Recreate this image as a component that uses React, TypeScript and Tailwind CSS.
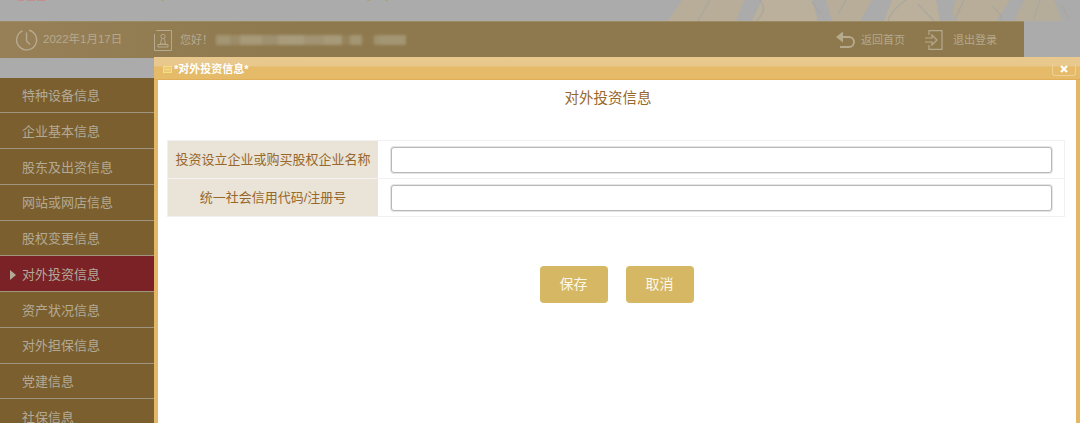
import React from "react";

const menuItems = [
  "特种设备信息",
  "企业基本信息",
  "股东及出资信息",
  "网站或网店信息",
  "股权变更信息",
  "对外投资信息",
  "资产状况信息",
  "对外担保信息",
  "党建信息",
  "社保信息",
];

const formRows = ["投资设立企业或购买股权企业名称", "统一社会信用代码/注册号"];

// masked user name: widths of the pixelated runs
const maskedRuns = [
  [14, "#a39673"],
  [10, "#9c8d68"],
  [22, "#a69a78"],
  [16, "#9f9170"],
  [26, "#a89c7c"],
  [20, "#a29472"],
  [18, "#a69a78"],
  [8, "#95825a"],
  [12, "#a39673"],
  [12, "#8f7a50"],
  [6, "#a0926f"],
  [26, "#a39673"],
] as const;

const FONT = "[font-family:'Liberation_Sans','Noto_Sans_CJK_SC',sans-serif]";

const ClockIcon = () => (
  <svg width="24" height="24" viewBox="0 0 24 24" fill="none" stroke="#b5a98e" strokeWidth="1.4">
    <path d="M7.500 2.800A10 10 0 1 0 14 2.200" />
    <path d="M11.500 4.500v8.500l3.500 3.500" />
  </svg>
);

const UserIcon = () => (
  <svg width="18" height="21" viewBox="0 0 18 21" fill="none" stroke="#b5a98e" strokeWidth="1">
    <path d="M2.500 .5h15v20H.5V4" />
    <circle cx="9" cy="6.500" r="2.200" />
    <path d="M7.500 9l-1 5h5l-1-5M4 14.500h10v2.500H4z" />
  </svg>
);

const BackIcon = () => (
  <svg width="20" height="18" viewBox="0 0 20 18" fill="none" stroke="#b5a98e" strokeWidth="2">
    <path d="M5 6h9a4.500 4.500 0 0 1 0 10H5" />
    <path d="M8 .5v11L1 6z" fill="#b5a98e" stroke="none" />
  </svg>
);

const LogoutIcon = () => (
  <svg width="18" height="20" viewBox="0 0 18 20" fill="none" stroke="#b5a98e" strokeWidth="1.2">
    <path d="M4 5V.6h13v18.800H4V15" />
    <path d="M0 8h7V5l5 5-5 5v-3H0" />
  </svg>
);

// carved pattern in the banner, only its lower part shows
const BannerArt = () => (
  <svg width="1080" height="21" viewBox="0 0 1080 21" className="absolute top-0 left-0">
    <g fill="#b7ad98">
      <path d="M668 21l14-21h62l-8 21z" />
      <path d="M752 21l10-21h50l6 21z" fill="#bab09b" />
      <path d="M832 21l-6-21h46l-12 21z" />
      <path d="M884 21l8-21h44l4 21z" fill="#bab09b" />
      <path d="M950 21l6-21h54l-14 21z" />
      <path d="M1014 21l10-21h30l8 21z" fill="#b5ac99" />
    </g>
    <g fill="none" stroke="#a9a69f" strokeWidth="1.500" opacity="0.8">
      <path d="M710 0l-12 21M760 0c6 8 4 14 -4 21M812 2l14 19M846 0l-8 14M888 21c2-8 8-14 18-21" />
      <path d="M918 4l16 17M964 0l-10 21M992 6c8 6 10 10 10 15M1040 0l-6 18M1062 6l8 15" />
    </g>
    <g fill="#ababab" opacity="0.7">
      <path d="M816 21l8-12 6 12zM946 21l4-14 8 14zM1006 21l6-10 6 10zM1066 21l8-18 6 18z" />
    </g>
    <g>
      <rect x="18" y="0" width="6" height="1" fill="#c48f8f" />
      <rect x="27" y="0" width="8" height="1" fill="#c48f8f" />
      <rect x="37" y="0" width="8" height="1" fill="#c48f8f" />
      <rect x="161" y="0" width="3" height="1" fill="#b39f6f" />
      <rect x="367" y="0" width="3" height="1" fill="#b39f6f" />
      <rect x="385" y="0" width="3" height="1" fill="#b39f6f" />
    </g>
  </svg>
);

const App = () => {
  return (
    <div className={`relative h-[423px] w-[1080px] overflow-hidden bg-[#ababab] text-[12px] ${FONT}`}>
      {/* top banner, mostly hidden behind the overlay */}
      <div className="relative h-[21px] overflow-hidden">
        <BannerArt />
      </div>

      {/* header bar */}
      <div className="flex h-[37px] w-[1024px] items-center justify-between border-t border-[#9c8a63] bg-gradient-to-r from-[#978057] to-[#8e784d] to-30% pr-[27px] pl-[15px] text-[#b5a98e]">
        <div className="flex items-center">
          <ClockIcon />
          <span className="ml-[4px] w-[111px] text-[11.5px]">2022年1月17日</span>
          <UserIcon />
          <span className="ml-[8px] text-[11px]">您好！</span>
          <div className="ml-[3px] flex h-[10px] w-[190px] blur-[1.5px]">
            {maskedRuns.map(([width, color], index) => (
              <span key={index} className="h-full" style={{ width, backgroundColor: color }} />
            ))}
          </div>
        </div>
        <div className="flex items-center text-[11px]">
          <BackIcon />
          <span className="mr-[20px] ml-[6px]">返回首页</span>
          <LogoutIcon />
          <span className="ml-[10px]">退出登录</span>
        </div>
      </div>

      {/* left menu */}
      <ul className="mt-[19.5px] w-[154px]">
        {menuItems.map((item, index) => (
          <li
            key={item}
            className={`relative flex h-[35.75px] items-center border-b border-[#a0957e] pt-[2px] pl-[22px] text-[13px] text-[#b3aa96] ${
              index === 5 ? "bg-[#7a2226]" : "bg-[#7b5f2f]"
            }`}
          >
            {index === 5 && (
              <span className="absolute left-[10px] h-0 w-0 border-y-[5px] border-l-[6px] border-y-transparent border-l-[#b3aa96]" />
            )}
            {item}
          </li>
        ))}
      </ul>

      {/* dialog */}
      <div className="absolute top-[57px] left-[154px] flex h-[366px] w-[926px] flex-col border-x-[4px] border-[#e3b765] bg-[#e3b765]">
        <div className="-mx-[4px] flex h-[23px] items-center justify-between border-b border-[#dfae57] bg-gradient-to-b from-[#e9c88e] from-40% to-[#e5bb69] to-45% pr-[4px] pl-[9px]">
          <div className="flex items-center pt-[3px] text-[11px] font-bold text-white">
            <span className="flex h-[7px] w-[9px] items-center justify-center border border-[#f2e27c] bg-[#ecc97a]">
              <span className="h-px w-[5px] bg-[#f2e27c]" />
            </span>
            <span className="ml-[2px]">*对外投资信息*</span>
          </div>
          <div className="mt-[2px] flex h-[13px] w-[24px] items-center justify-center rounded-b-[3px] border border-t-0 border-[#efcf94]">
            <svg width="8" height="8" viewBox="0 0 8 8" stroke="#fff" strokeWidth="2.200">
              <path d="M1 1l6 6M7 1l-6 6" />
            </svg>
          </div>
        </div>
        <div className="flex-1 bg-white">
          <h2 className="pt-[8px] pr-[18px] text-center text-[14.5px] leading-[20px] font-normal text-[#97682a]">
            对外投资信息
          </h2>
          <div className="mt-[32px] mr-[11px] ml-[9px] border border-[#f1f1f1]">
            {formRows.map((label, index) => (
              <div
                key={label}
                className={index > 0 ? "flex h-[38px] border-t border-[#f1f1f1]" : "flex h-[37px]"}
              >
                <div className="flex w-[210px] shrink-0 items-center justify-center bg-[#e9e3d8] text-[13px] text-[#97682a]">
                  {label}
                </div>
                <div className="flex flex-1 items-center pr-[12px] pl-[13px]">
                  <input className="h-[26px] w-full rounded-[3px] border border-[#b8b8b8] bg-white shadow-[0_0_0_1px_#e6e6e6]" />
                </div>
              </div>
            ))}
          </div>
          <div className="mt-[49px] flex justify-center gap-[18px] pr-[1px]">
            <button className="h-[37px] w-[68px] rounded-[4px] bg-[#d5b764] text-[14px] text-[#fdf8e8]">保存</button>
            <button className="h-[37px] w-[68px] rounded-[4px] bg-[#d5b764] text-[14px] text-[#fdf8e8]">取消</button>
          </div>
        </div>
      </div>
    </div>
  );
};

export default App;
